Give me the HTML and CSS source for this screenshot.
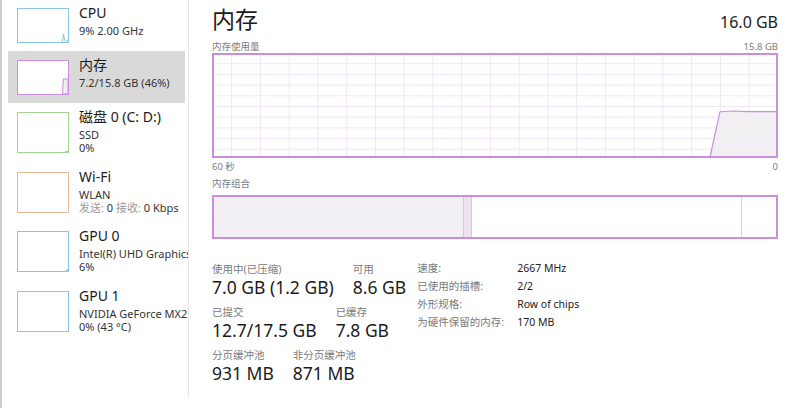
FILE: index.html
```html
<!DOCTYPE html>
<html lang="zh-CN">
<head>
<meta charset="utf-8">
<title>内存</title>
<link rel="stylesheet" href="styles.css">
</head>
<body>
<div class="app">
  <aside class="sidebar">
    <ul class="perf-list">
      <li class="perf-item">
        <div class="thumb thumb-cpu">
          <svg width="50" height="33" viewBox="0 0 50 33"><path d="M43,33 L44.5,33 L45.5,25 L46.5,31 L47.5,32 L50,32" fill="none" stroke="#8cc4e8" stroke-width="1"/></svg>
        </div>
        <div class="perf-text">
          <div class="perf-title">CPU</div>
          <div class="perf-sub">9% 2.00 GHz</div>
        </div>
      </li>
      <li class="perf-item selected">
        <div class="thumb thumb-mem">
          <svg width="50" height="33" viewBox="0 0 50 33"><path d="M44.5,33 L45.3,18 L50,18 L50,33 Z" fill="#f1eef3" stroke="#c98fdc" stroke-width="1"/></svg>
        </div>
        <div class="perf-text">
          <div class="perf-title">内存</div>
          <div class="perf-sub">7.2/15.8 GB (46%)</div>
        </div>
      </li>
      <li class="perf-item">
        <div class="thumb thumb-tall thumb-disk">
          <svg width="50" height="39" viewBox="0 0 50 39"><path d="M47,38.5 L50,38.5" stroke="#9fd48f" stroke-width="1"/></svg>
        </div>
        <div class="perf-text">
          <div class="perf-title">磁盘 0 (C: D:)</div>
          <div class="perf-sub">SSD</div>
          <div class="perf-sub">0%</div>
        </div>
      </li>
      <li class="perf-item">
        <div class="thumb thumb-tall thumb-net"></div>
        <div class="perf-text">
          <div class="perf-title">Wi-Fi</div>
          <div class="perf-sub">WLAN</div>
          <div class="perf-sub"><span class="muted">发送:</span> 0 <span class="muted">接收:</span> 0 Kbps</div>
        </div>
      </li>
      <li class="perf-item">
        <div class="thumb thumb-tall thumb-gpu">
          <svg width="50" height="39" viewBox="0 0 50 39"><path d="M47,39 L50,36.5 L50,39 Z" fill="#8cc4e8"/></svg>
        </div>
        <div class="perf-text">
          <div class="perf-title">GPU 0</div>
          <div class="perf-sub">Intel(R) UHD Graphics 620</div>
          <div class="perf-sub">6%</div>
        </div>
      </li>
      <li class="perf-item">
        <div class="thumb thumb-tall thumb-gpu"></div>
        <div class="perf-text">
          <div class="perf-title">GPU 1</div>
          <div class="perf-sub">NVIDIA GeForce MX250</div>
          <div class="perf-sub">0% (43 °C)</div>
        </div>
      </li>
    </ul>
  </aside>

  <main class="main">
    <header class="head">
      <h1 class="head-title">内存</h1>
      <div class="head-total">16.0 GB</div>
    </header>

    <div class="caption-row caption-top">
      <span>内存使用量</span>
      <span>15.8 GB</span>
    </div>

    <div class="graph">
      <svg width="566" height="105" viewBox="0 0 566 105">
        <g stroke="#f2e6f6" stroke-width="1">
          <line x1="19.7" y1="0" x2="19.7" y2="105"/>
          <line x1="48.45" y1="0" x2="48.45" y2="105"/>
          <line x1="77.2" y1="0" x2="77.2" y2="105"/>
          <line x1="105.95" y1="0" x2="105.95" y2="105"/>
          <line x1="134.7" y1="0" x2="134.7" y2="105"/>
          <line x1="163.45" y1="0" x2="163.45" y2="105"/>
          <line x1="192.2" y1="0" x2="192.2" y2="105"/>
          <line x1="220.95" y1="0" x2="220.95" y2="105"/>
          <line x1="249.7" y1="0" x2="249.7" y2="105"/>
          <line x1="278.45" y1="0" x2="278.45" y2="105"/>
          <line x1="307.2" y1="0" x2="307.2" y2="105"/>
          <line x1="335.95" y1="0" x2="335.95" y2="105"/>
          <line x1="364.7" y1="0" x2="364.7" y2="105"/>
          <line x1="393.45" y1="0" x2="393.45" y2="105"/>
          <line x1="422.2" y1="0" x2="422.2" y2="105"/>
          <line x1="450.95" y1="0" x2="450.95" y2="105"/>
          <line x1="479.7" y1="0" x2="479.7" y2="105"/>
          <line x1="508.45" y1="0" x2="508.45" y2="105"/>
          <line x1="537.2" y1="0" x2="537.2" y2="105"/>
          <line x1="0" y1="10.7" x2="566" y2="10.7"/>
          <line x1="0" y1="21.4" x2="566" y2="21.4"/>
          <line x1="0" y1="32.1" x2="566" y2="32.1"/>
          <line x1="0" y1="42.8" x2="566" y2="42.8"/>
          <line x1="0" y1="53.5" x2="566" y2="53.5"/>
          <line x1="0" y1="64.2" x2="566" y2="64.2"/>
          <line x1="0" y1="74.9" x2="566" y2="74.9"/>
          <line x1="0" y1="85.6" x2="566" y2="85.6"/>
          <line x1="0" y1="96.3" x2="566" y2="96.3"/>
        </g>
        <path d="M498,104 L508,58.7 L521,58 L536,58.7 L566,58.7 L566,104 Z" fill="#efedf1" fill-opacity="0.9" stroke="#c98fdc" stroke-width="1.2"/>
        <rect x="1" y="1" width="564" height="103" fill="none" stroke="#c98fdc" stroke-width="2"/>
      </svg>
    </div>

    <div class="caption-row caption-axis">
      <span>60 秒</span>
      <span>0</span>
    </div>

    <div class="caption-row caption-comp">
      <span>内存组合</span>
    </div>

    <div class="comp">
      <div class="seg seg-used" style="width:249px"></div>
      <div class="seg seg-mod" style="width:7px"></div>
      <div class="seg seg-standby" style="width:269px"></div>
      <div class="seg seg-free"></div>
    </div>

    <section class="stats">
      <div class="stats-main">
        <div class="stat-row">
          <div class="stat">
            <div class="stat-label">使用中(已压缩)</div>
            <div class="stat-value">7.0 GB (1.2 GB)</div>
          </div>
          <div class="stat">
            <div class="stat-label">可用</div>
            <div class="stat-value">8.6 GB</div>
          </div>
        </div>
        <div class="stat-row">
          <div class="stat">
            <div class="stat-label">已提交</div>
            <div class="stat-value">12.7/17.5 GB</div>
          </div>
          <div class="stat">
            <div class="stat-label">已缓存</div>
            <div class="stat-value">7.8 GB</div>
          </div>
        </div>
        <div class="stat-row">
          <div class="stat">
            <div class="stat-label">分页缓冲池</div>
            <div class="stat-value">931 MB</div>
          </div>
          <div class="stat">
            <div class="stat-label">非分页缓冲池</div>
            <div class="stat-value">871 MB</div>
          </div>
        </div>
      </div>
      <dl class="details">
        <dt>速度:</dt><dd>2667 MHz</dd>
        <dt>已使用的插槽:</dt><dd>2/2</dd>
        <dt>外形规格:</dt><dd>Row of chips</dd>
        <dt>为硬件保留的内存:</dt><dd>170 MB</dd>
      </dl>
    </section>
  </main>
</div>
</body>
</html>
```

FILE: styles.css
```css
* { box-sizing: border-box; }

html, body {
  margin: 0;
  padding: 0;
  background: #ffffff;
}

body {
  width: 798px;
  height: 408px;
  overflow: hidden;
  font-family: "Noto Sans", "Noto Sans CJK SC", sans-serif;
  color: #1b1b1b;
}

.app {
  display: flex;
  height: 408px;
  border-left: 2px solid #cdcdcd;
}

/* ---------- sidebar ---------- */
.sidebar {
  flex: 0 0 187px;
  height: 397px;
  border-right: 1px solid #e4e4e4;
  overflow: hidden;
}

.perf-list {
  list-style: none;
  margin: -1px 0 0 0;
  padding: 0;
}

.perf-item {
  display: flex;
  align-items: flex-start;
  gap: 10px;
  width: 177px;
  margin-left: 6px;
  padding: 9px 0 8px 9px;
  white-space: nowrap;
}

.perf-item.selected {
  background: #d9d9d9;
}

.thumb {
  flex: 0 0 52px;
  width: 52px;
  height: 35px;
  border: 1px solid #8cc4e8;
  background: #ffffff;
  overflow: hidden;
}

.thumb svg { display: block; }

.thumb-tall { height: 41px; }
.thumb-cpu { border-color: #8cc4e8; }
.thumb-mem { border-color: #c98fdc; }
.thumb-disk { border-color: #a3d693; }
.thumb-net { border-color: #e6b999; }
.thumb-gpu { border-color: #8cc4e8; }

.perf-text {
  margin-top: -4px;
}

.perf-title {
  font-size: 14px;
  line-height: 18px;
  margin-bottom: 2px;
  color: #1b1b1b;
}

.perf-sub {
  font-size: 11px;
  line-height: 13.3px;
  color: #333333;
}

.muted { color: #9a9a9a; }

/* ---------- main ---------- */
.main {
  flex: 1;
  padding: 0 20px 0 23px;
  min-width: 0;
}

.head {
  display: flex;
  justify-content: space-between;
  align-items: baseline;
  height: 40px;
  padding-top: 4px;
}

.head-title {
  margin: 0;
  font-size: 23px;
  line-height: 30px;
  font-weight: 400;
  color: #1b1b1b;
}

.head-total {
  font-size: 16px;
  line-height: 20px;
  color: #1b1b1b;
}

.caption-row {
  display: flex;
  justify-content: space-between;
  font-size: 9.5px;
  line-height: 12px;
  color: #7d7d7d;
}

.caption-top {
  height: 13px;
  padding-top: 1px;
}

.graph {
  height: 105px;
}

.graph svg { display: block; }

.caption-axis {
  height: 17px;
  padding-top: 3px;
}

.caption-comp {
  height: 15px;
  padding-top: 3px;
}

.comp {
  display: flex;
  height: 44px;
  margin-top: 5px;
  border: 2px solid #c98fdc;
}

.seg { height: 100%; }
.seg-used { background: #f2f0f4; }
.seg-mod {
  background: #ece0f1;
  border-left: 1px solid #dcc3e6;
  border-right: 1px solid #dcc3e6;
  box-sizing: content-box;
}
.seg-standby {
  background: #ffffff;
  border-right: 1px solid #e0c9ea;
  box-sizing: content-box;
}
.seg-free { flex: 1; background: #ffffff; }

/* ---------- stats ---------- */
.stats {
  display: flex;
  align-items: flex-start;
  gap: 11px;
  margin-top: 24px;
}

.stats-main {
  display: flex;
  flex-direction: column;
  gap: 8px;
}

.stat-row {
  display: flex;
  gap: 19px;
}

.stat-label {
  font-size: 10.5px;
  line-height: 13px;
  color: #7a7a7a;
  white-space: nowrap;
}

.stat-value {
  font-size: 17.5px;
  line-height: 22px;
  color: #1b1b1b;
  white-space: nowrap;
}

.details {
  display: grid;
  grid-template-columns: 100px auto;
  grid-auto-rows: 18px;
  margin: -4px 0 0 0;
  font-size: 10.5px;
  line-height: 18px;
  white-space: nowrap;
}

.details dt {
  color: #7a7a7a;
}

.details dd {
  margin: 0;
  color: #222222;
}
```
